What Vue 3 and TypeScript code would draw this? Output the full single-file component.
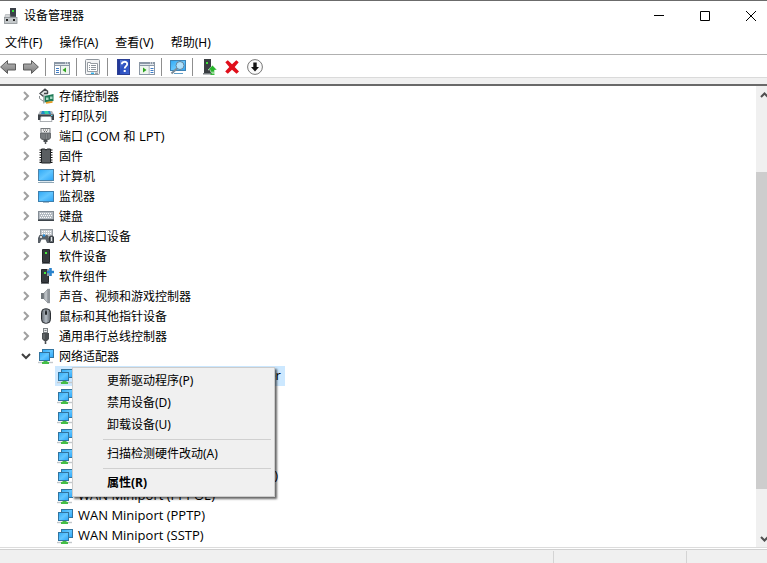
<script setup lang="ts">
import { computed, ref } from 'vue'

interface Category {
  label: string
  icon: string
  open?: boolean
  devices?: string[]
}

type Tool = { icon: string; label: string } | null

const menus: string[] = ['文件(F)', '操作(A)', '查看(V)', '帮助(H)']

const tools: Tool[] = [
  { icon: 'back', label: '后退' },
  { icon: 'forward', label: '前进' },
  null,
  { icon: 'tree-pane', label: '显示/隐藏控制台树' },
  null,
  { icon: 'props', label: '属性' },
  null,
  { icon: 'help', label: '帮助' },
  { icon: 'action-pane', label: '显示/隐藏操作窗格' },
  null,
  { icon: 'scan', label: '扫描检测硬件改动' },
  null,
  { icon: 'update', label: '更新驱动程序' },
  { icon: 'remove', label: '卸载设备' },
  { icon: 'disable', label: '禁用设备' },
]

const categories = ref<Category[]>([
  { label: '存储控制器', icon: 'storage' },
  { label: '打印队列', icon: 'printer' },
  { label: '端口 (COM 和 LPT)', icon: 'port' },
  { label: '固件', icon: 'chip' },
  { label: '计算机', icon: 'computer' },
  { label: '监视器', icon: 'monitor' },
  { label: '键盘', icon: 'keyboard' },
  { label: '人机接口设备', icon: 'hid' },
  { label: '软件设备', icon: 'tower' },
  { label: '软件组件', icon: 'component' },
  { label: '声音、视频和游戏控制器', icon: 'speaker' },
  { label: '鼠标和其他指针设备', icon: 'mouse' },
  { label: '通用串行总线控制器', icon: 'usb' },
  {
    label: '网络适配器',
    icon: 'network',
    open: true,
    devices: [
      'Realtek PCI GBE Family Controller',
      'WAN Miniport (IKEv2)',
      'WAN Miniport (IP)',
      'WAN Miniport (IPv6)',
      'WAN Miniport (L2TP)',
      'WAN Miniport (Network Monitor)',
      'WAN Miniport (PPPOE)',
      'WAN Miniport (PPTP)',
      'WAN Miniport (SSTP)',
    ],
  },
])

const selected = ref('Realtek PCI GBE Family Controller')

const contextItems: (string | null)[] = [
  '更新驱动程序(P)',
  '禁用设备(D)',
  '卸载设备(U)',
  null,
  '扫描检测硬件改动(A)',
  null,
  '属性(R)',
]

// Latin runs are set one size larger than the Chinese text beside them.
function runs(label: string): { text: string; latin: boolean }[] {
  return label
    .split(/([ -~]+)/)
    .filter((text) => text.length > 0)
    .map((text) => ({ text, latin: /^[ -~]/.test(text) }))
}

const scroll = { before: 69, view: 317, after: 41 }
const thumb = computed(() => {
  const total = scroll.before + scroll.view + scroll.after
  return {
    top: `${(scroll.before / total) * 100}%`,
    height: `${(scroll.view / total) * 100}%`,
  }
})
</script>

<template>
  <div class="window">
    <svg class="sprite" width="0" height="0" aria-hidden="true">
      <defs>
        <linearGradient id="g-screen" x1="0" y1="0" x2="1" y2="1">
          <stop offset="0" stop-color="#2fa8f5" />
          <stop offset="0.5" stop-color="#62c6ff" />
          <stop offset="1" stop-color="#2aa4f8" />
        </linearGradient>
        <linearGradient id="g-arrow" x1="0" y1="0" x2="0" y2="1">
          <stop offset="0" stop-color="#b8b8b8" />
          <stop offset="1" stop-color="#7c7c7c" />
        </linearGradient>
        <linearGradient id="g-help" x1="0" y1="0" x2="1" y2="1">
          <stop offset="0" stop-color="#6d8ce0" />
          <stop offset="0.5" stop-color="#2b4fc0" />
          <stop offset="1" stop-color="#3c62cf" />
        </linearGradient>
        <linearGradient id="g-mouse" x1="0" y1="0" x2="1" y2="0">
          <stop offset="0" stop-color="#5d636a" />
          <stop offset="0.5" stop-color="#b4bcc4" />
          <stop offset="1" stop-color="#5d636a" />
        </linearGradient>
      </defs>

      <symbol id="i-app" viewBox="0 0 16 16">
        <rect x="7" y="0" width="6" height="9" fill="#3b4148" />
        <rect x="9" y="2" width="2" height="2" fill="#35e03a" />
        <path d="M2.500 6.500H7V9h6l1 1H1.500z" fill="#d3d6d8" stroke="#a4a8ab" stroke-width=".6" />
        <rect x="1.500" y="9.500" width="12.500" height="6" fill="#c4c8ca" stroke="#8d9296" stroke-width=".8" />
        <rect x="3" y="11" width="2" height="2" fill="#222" />
        <rect x="10" y="11" width="2" height="2" fill="#222" />
      </symbol>
      <symbol id="i-back" viewBox="0 0 16 16">
        <path d="M.6 8 7.500 1.600V5h8v6h-8v3.400z" fill="url(#g-arrow)" stroke="#5c5c5c" />
      </symbol>
      <symbol id="i-forward" viewBox="0 0 16 16">
        <path d="M15.400 8 8.500 1.600V5h-8v6h8v3.400z" fill="url(#g-arrow)" stroke="#5c5c5c" />
      </symbol>
      <symbol id="i-tree-pane" viewBox="0 0 16 16">
        <rect x=".5" y="3.500" width="15" height="12" fill="#fff" stroke="#8b97a5" />
        <path d="M0 3h16v4H0z" fill="#8b97a5" />
        <path d="M1 5.500h14" stroke="#dfe5eb" />
        <path d="M11 4h1M13 4h1" stroke="#fff" />
        <path d="M2 9.500h3M2 11.500h3M2 13.500h3" stroke="#3e7cc6" />
        <path d="M6.500 7v8" stroke="#8b97a5" />
        <rect x="7" y="7" width="8" height="8" fill="#eef5ee" />
        <path d="M12 8.500v5L8.500 11z" fill="#2fa51f" />
      </symbol>
      <symbol id="i-action-pane" viewBox="0 0 16 16">
        <rect x=".5" y="3.500" width="15" height="12" fill="#fff" stroke="#8b97a5" />
        <path d="M0 3h16v4H0z" fill="#8b97a5" />
        <path d="M1 5.500h14" stroke="#dfe5eb" />
        <path d="M11 4h1M13 4h1" stroke="#fff" />
        <path d="M11.500 9.500h3M11.500 11.500h3M11.500 13.500h3" stroke="#3e7cc6" />
        <path d="M10 7v8" stroke="#8b97a5" />
        <rect x="1" y="7" width="8.500" height="8" fill="#eef5ee" />
        <path d="M4 8.500v5L7.500 11z" fill="#2fa51f" />
      </symbol>
      <symbol id="i-props" viewBox="0 0 16 16">
        <rect x=".5" y=".5" width="14" height="15" rx="1" fill="#f3f4f5" stroke="#8e959c" />
        <path d="M2.500 3.500h3v1h7v8h-10z" fill="#fff" stroke="#979da3" />
        <path d="M4 6.500h1M6 6.500h5M4 8.500h1M6 8.500h5M4 10.500h1M6 10.500h5" stroke="#8e959c" />
        <path d="M6 14.300h3" stroke="#2fb2ef" stroke-width="1.400" />
        <path d="M10 14.300h3" stroke="#9aa1a8" stroke-width="1.400" />
      </symbol>
      <symbol id="i-help" viewBox="0 0 16 16">
        <rect x="1.500" y=".5" width="12" height="15" fill="url(#g-help)" stroke="#2b3f94" />
        <path d="M2 1h2v14H2z" fill="#22389a" />
        <path d="M5.800 5.200c0-3.200 5.400-3.200 5.400-.2 0 2.200-2.500 2.200-2.500 4.600" fill="none" stroke="#fff" stroke-width="1.800" />
        <rect x="7.700" y="11" width="2" height="2" fill="#fff" />
      </symbol>
      <symbol id="i-scan" viewBox="0 0 16 16">
        <rect x=".5" y="1.500" width="15" height="10" fill="url(#g-screen)" stroke="#3d83b5" />
        <path d="M4 14.500h9" stroke="#5f9cc6" />
        <circle cx="10" cy="6.500" r="4" fill="#bfe6fb" fill-opacity=".85" stroke="#62849c" />
        <path d="M7 9.500 1.500 14.500" stroke="#7a8b98" stroke-width="2" />
      </symbol>
      <symbol id="i-update" viewBox="0 0 16 16">
        <path d="M3 0h7v14H3z" fill="#3a3e42" />
        <path d="M2 14h9v1.500H2z" fill="#777c80" />
        <rect x="5" y="3" width="2" height="2" fill="#41e23c" />
        <path d="M11.500 6.300 16 11h-2.500v2h-4v-2H7z" fill="#28b62c" stroke="#fff" stroke-width=".4" />
        <path d="M9.500 14h4M9.500 15.600h4" stroke="#28b62c" />
      </symbol>
      <symbol id="i-remove" viewBox="0 0 16 16">
        <path d="M1.300 3.300 3.800 1.300l4.200 4 4.300-4L14.700 3.200 10.700 8l4.300 4.500-2.500 2.200L8 10.700l-4.200 4L1.200 12.500 5.300 8z" fill="#e00f1b" />
      </symbol>
      <symbol id="i-disable" viewBox="0 0 16 16">
        <circle cx="8" cy="8" r="7.400" fill="#fafafa" stroke="#777" />
        <path d="M6.300 3.500h3.400V8H12l-4 4.500L4 8h2.300z" fill="#111" />
      </symbol>

      <symbol id="i-storage" viewBox="0 0 16 16">
        <path d="M6.500 1 1.500 5.500l5 4H9V6l3-1.500z" fill="#e3e5e6" />
        <path d="M10 3.500 7 1.200 2 5.500l3.500 3M6 5.500h3.500V3.500" fill="none" stroke="#44484b" stroke-width="1.300" />
        <path d="M1.500 8v2.500L5 13h1" fill="none" stroke="#8a8f92" />
        <path d="M6.500 8 15.500 6v7l-9 1.500z" fill="#1f7a57" />
        <path d="M8 9.500h2.500V12H8zM12 8.500h2.500V11H12z" fill="#a5d6bf" />
        <path d="M5.800 6.500v9" stroke="#8e9496" />
        <path d="M8 14.900 14.500 13.800" stroke="#e99b22" stroke-width="1.700" />
      </symbol>
      <symbol id="i-printer" viewBox="0 0 16 16">
        <path d="M2 3h12l2 3.500V11H0V6.500z" fill="#aeb4b9" />
        <path d="M4 3h8l1 3H3z" fill="#2589c9" />
        <path d="M6 3h4l1 3H7z" fill="#35d2a4" />
        <path d="M0 6.500h16V12h-2.500V9h-11v3H0z" fill="#3d4247" />
        <path d="M3 8.500h10l1 5H2z" fill="#fff" stroke="#878d92" stroke-width=".7" />
        <path d="M13 7.500h1.500" stroke="#53d8ef" />
      </symbol>
      <symbol id="i-port" viewBox="0 0 16 16">
        <rect x="3" y=".5" width="9" height="4.500" fill="#eceded" stroke="#777b7e" />
        <path d="M5 2h1M7 2h1M9 2h1M6 3.500h1M8 3.500h1" stroke="#666" />
        <path d="M2 5h11v5l-2 2H4l-2-2z" fill="#6a6e71" />
        <path d="M4 6v4M6 6v5M8.500 6v5M11 6v4" stroke="#85898c" />
        <path d="M5.500 11.500h4V14h-4z" fill="#44484b" />
        <path d="M7.500 13v3" stroke="#55595c" stroke-width="1.500" />
      </symbol>
      <symbol id="i-chip" viewBox="0 0 16 16">
        <path d="M1.500 2h13M1.500 4.500h13M1.500 7h13M1.500 9.500h13M1.500 12h13M1.500 14.300h13" stroke="#111" stroke-width="1.200" />
        <path d="M3.500 1h3L8 2l1.500-1h3v14h-9z" fill="#5a5e61" stroke="#1f2224" />
      </symbol>
      <symbol id="i-computer" viewBox="0 0 16 16">
        <rect x=".5" y="1.500" width="15" height="11" fill="url(#g-screen)" stroke="#4d83a8" />
        <path d="M0 14.500h16" stroke="#8fa6b5" />
        <path d="M2 13.500h12" stroke="#dde8ef" />
      </symbol>
      <symbol id="i-monitor" viewBox="0 0 16 16">
        <rect x=".5" y="3.500" width="15" height="10" fill="url(#g-screen)" stroke="#3d7fae" />
        <path d="M5 14.500h6" stroke="#a9bcc9" />
      </symbol>
      <symbol id="i-keyboard" viewBox="0 0 16 16">
        <rect x=".5" y="3.500" width="15" height="8" fill="#b4bbc2" stroke="#858d95" />
        <path d="M2 5.500h12M3 7.500h11M2 9.500h12" stroke="#fff" stroke-dasharray="1 1" />
        <path d="M0 11.500h16V13H0z" fill="#3d444a" />
      </symbol>
      <symbol id="i-hid" viewBox="0 0 16 16">
        <rect x="2.500" y="1.500" width="12" height="7" fill="#c3c8cd" stroke="#969da3" />
        <path d="M4 3.500h10M4 5.500h10" stroke="#fff" stroke-dasharray="1 1" />
        <path d="M0 15v-5l1.500-3H4l1 1h2l1-1h1.500L11 10v5H9l-1.500-3.500h-4L2 15z" fill="#596067" />
        <path d="M2 9h2M3 8v2" stroke="#fff" />
        <circle cx="6" cy="7.500" r="1.200" fill="#258cdb" />
        <path d="M11.500 14.500V9c0-1.300 4-1.300 4 0v5.500z" fill="#646b71" stroke="#30353a" />
        <path d="M13.500 9v4" stroke="#e1e3e5" />
      </symbol>
      <symbol id="i-tower" viewBox="0 0 16 16">
        <path d="M4.500 1.500h7v13h-7z" fill="#373b3f" stroke="#24272a" />
        <rect x="7" y="4" width="2" height="2" fill="#46ef3c" />
        <path d="M4 15.500h8" stroke="#74797d" />
      </symbol>
      <symbol id="i-component" viewBox="0 0 16 16">
        <path d="M3.500 1.500h7v13h-7z" fill="#373b3f" stroke="#24272a" />
        <rect x="6" y="4" width="2" height="2" fill="#46ef3c" />
        <path d="M3 15.500h8" stroke="#74797d" />
        <path d="M9 0h7v8H9z" fill="#fff" fill-opacity=".5" />
        <path d="M12.500 0v8M9 4h7" stroke="#2b83cc" stroke-width="2.600" />
      </symbol>
      <symbol id="i-speaker" viewBox="0 0 16 16">
        <path d="M3 5h3v6H3z" fill="#6f757a" />
        <path d="M6 5 10 1v14L6 11z" fill="#b9bec2" stroke="#878d92" stroke-width=".7" />
        <path d="M9.500.8H12v14.400H9.500z" fill="#8f959a" />
      </symbol>
      <symbol id="i-mouse" viewBox="0 0 16 16">
        <rect x="3.500" y=".7" width="9" height="14.600" rx="4" fill="url(#g-mouse)" stroke="#2b2f33" />
        <path d="M8 1v5" stroke="#2b2f33" />
        <rect x="7" y="3" width="2" height="4" rx="1" fill="#25282b" />
      </symbol>
      <symbol id="i-usb" viewBox="0 0 16 16">
        <rect x="5.500" y=".5" width="4" height="4" fill="#e8e9ea" stroke="#7c8184" />
        <path d="M6.500 2.500h2" stroke="#7c8184" />
        <path d="M4 5h7v6l-2 2H6l-2-2z" fill="#4a4e51" />
        <path d="M6 6v5" stroke="#777c7f" />
        <path d="M7.500 13v3" stroke="#4a4e51" stroke-width="1.600" />
      </symbol>
      <symbol id="i-network" viewBox="0 0 16 16">
        <rect x="4.500" y="1.500" width="11" height="8" fill="url(#g-screen)" stroke="#32749f" />
        <rect x="1.500" y="4.500" width="10" height="8" fill="url(#g-screen)" stroke="#32749f" />
        <path d="M0 14.500h15" stroke="#c3c8cb" stroke-width="1.400" />
        <path d="M5.500 13h4v1H11v2H4v-2h1.500z" fill="#45bd48" />
      </symbol>
    </svg>

    <header class="titlebar">
      <svg class="icon"><use href="#i-app" /></svg>
      <h1 class="title">设备管理器</h1>
      <div class="controls">
        <button type="button" aria-label="最小化">
          <svg class="glyph" viewBox="0 0 10 10"><path d="M0 4.500h10" /></svg>
        </button>
        <button type="button" aria-label="最大化">
          <svg class="glyph" viewBox="0 0 10 10"><path d="M.5.5h9v9h-9z" /></svg>
        </button>
        <button type="button" aria-label="关闭">
          <svg class="glyph" viewBox="0 0 10 10"><path d="M0 0l10 10M10 0 0 10" /></svg>
        </button>
      </div>
    </header>

    <nav class="menubar">
      <button v-for="menu in menus" :key="menu" type="button">{{ menu }}</button>
    </nav>

    <div class="toolbar" role="toolbar">
      <template v-for="(tool, i) in tools" :key="i">
        <button v-if="tool" type="button" :aria-label="tool.label">
          <svg class="icon"><use :href="`#i-${tool.icon}`" /></svg>
        </button>
        <span v-else class="divider"></span>
      </template>
    </div>

    <main class="content">
      <div class="pane">
        <ul class="tree" role="tree">
          <li v-for="category in categories" :key="category.label" role="treeitem">
            <div class="row">
              <button
                class="expander"
                :class="{ open: category.open }"
                type="button"
                :aria-label="category.label"
                @click="category.open = !category.open"
              >
                <svg viewBox="0 0 10 10"><path d="M3 1l4 4-4 4" /></svg>
              </button>
              <svg class="icon"><use :href="`#i-${category.icon}`" /></svg>
              <span class="label"><span
                v-for="(run, i) in runs(category.label)"
                :key="i"
                :class="{ latin: run.latin }"
              >{{ run.text }}</span></span>
            </div>
            <ul v-if="category.open && category.devices" class="devices">
              <li
                v-for="device in category.devices"
                :key="device"
                class="device"
                :class="{ selected: device === selected }"
                role="treeitem"
                @click="selected = device"
              >
                <svg class="icon"><use href="#i-network" /></svg>
                <span class="label latin">{{ device }}</span>
              </li>
            </ul>
          </li>
        </ul>

        <div class="context" role="menu">
          <template v-for="(item, i) in contextItems" :key="i">
            <button
              v-if="item"
              type="button"
              role="menuitem"
              :class="{ primary: i === contextItems.length - 1 }"
            >{{ item }}</button>
            <hr v-else />
          </template>
        </div>
      </div>

      <div class="scrollbar">
        <button type="button" aria-label="向上滚动">
          <svg viewBox="0 0 9 6"><path d="M1 5l3.500-3.500L8 5" /></svg>
        </button>
        <div class="track"><div class="thumb" :style="thumb"></div></div>
        <button type="button" aria-label="向下滚动">
          <svg viewBox="0 0 9 6"><path d="M1 1l3.500 3.500L8 1" /></svg>
        </button>
      </div>
    </main>

    <footer class="status">
      <span class="cell wide"></span>
      <span class="cell"></span>
      <span class="cell last"></span>
    </footer>
  </div>
</template>

<style>
body {
  background: #fff;
  overflow: hidden;
}
</style>

<style scoped>
.window {
  display: flex;
  flex-direction: column;
  height: 100vh;
  box-sizing: border-box;
  border-top: 1px solid #6b6b6b;
  overflow: hidden;
  background: #fff;
  color: #000;
  font-family: 'Noto Sans', 'Noto Sans CJK SC', sans-serif;
  font-size: 12px;
  line-height: 20px;
}

.sprite {
  position: absolute;
}

button {
  display: flex;
  align-items: center;
  justify-content: center;
  margin: 0;
  padding: 0;
  border: 0;
  background: none;
  color: inherit;
  font: inherit;
  white-space: nowrap;
}

.icon {
  display: block;
  flex: none;
  width: 16px;
  height: 16px;
}

.titlebar {
  display: flex;
  flex: none;
  align-items: center;
  height: 30px;
  padding-left: 3px;
}

.title {
  flex: 1;
  margin: 0 0 0 5px;
  font-size: 12px;
  font-weight: 400;
}

.controls {
  display: flex;
  align-self: stretch;
  margin-right: -7px;
}

.controls button {
  width: 46px;
}

.glyph {
  width: 10px;
  height: 10px;
  fill: none;
  stroke: #000;
}

.menubar {
  display: flex;
  flex: none;
  gap: 17px;
  height: 23px;
  padding-left: 5px;
  border-bottom: 1px solid #b0b0b0;
}

.toolbar {
  display: flex;
  flex: none;
  align-items: center;
  gap: 7px;
  height: 22px;
  padding-top: 1px;
  box-sizing: border-box;
}

.divider {
  width: 1px;
  height: 18px;
  margin: 0 1px 0 -1px;
  background: #8f8f8f;
}

.content {
  display: flex;
  flex: 1;
  min-height: 0;
  border-top: 1px solid #dadada;
  border-bottom: 1px solid #dcdcdc;
}

.pane {
  position: relative;
  flex: 1;
  min-width: 0;
  margin-top: 6px;
  border-top: 2px solid #696969;
  overflow: hidden;
  box-shadow: 0 -6px 0 #f0f0f0;
}

.tree,
.devices {
  margin: 0;
  padding: 0;
  list-style: none;
}

.row {
  display: flex;
  align-items: center;
  height: 20px;
  padding-left: 20px;
}

.label {
  padding: 0 4px 0 5px;
  white-space: pre;
}

.row .label {
  padding-top: 2px;
}

.latin {
  font-family: 'Open Sans', 'Noto Sans', sans-serif;
  font-size: 13px;
}

.row .latin {
  line-height: 13px;
}

.device .label {
  padding-bottom: 2px;
}

.expander {
  width: 12px;
  height: 12px;
  margin-right: 6px;
}

.expander svg {
  width: 10px;
  height: 10px;
  fill: none;
  stroke: #a0a0a0;
  stroke-width: 2;
}

.expander.open svg {
  stroke: #404040;
  transform: rotate(90deg);
}

.device {
  display: flex;
  align-items: center;
  width: max-content;
  height: 20px;
  margin-left: 55px;
  padding-left: 2px;
}

.device.selected {
  background: #cce8ff;
}

.context {
  position: absolute;
  left: 72px;
  top: 281px;
  display: flex;
  flex-direction: column;
  width: 203px;
  box-sizing: border-box;
  padding: 2px;
  border: 1px solid #ccc;
  background: #f0f0f0;
  box-shadow: 2px 2px 2px rgba(0, 0, 0, 0.6);
}

.context button {
  justify-content: flex-start;
  height: 22px;
  padding-left: 32px;
}

.context .primary {
  font-weight: 700;
}

.context hr {
  height: 1px;
  margin: 3px 1px 3px 28px;
  border: 0;
  background: #d0d0d0;
}

.scrollbar {
  display: flex;
  flex: none;
  flex-direction: column;
  width: 11px;
  margin-top: 6px;
  border-top: 2px solid #696969;
  background: #f0f0f0;
  box-shadow: 0 -6px 0 #f0f0f0;
  overflow: hidden;
}

.scrollbar button {
  width: 17px;
  height: 17px;
}

.scrollbar svg {
  width: 9px;
  height: 6px;
  fill: none;
  stroke: #505050;
  stroke-width: 2;
}

.track {
  position: relative;
  flex: 1;
}

.thumb {
  position: absolute;
  width: 100%;
  background: #cdcdcd;
}

.status {
  display: flex;
  flex: none;
  height: 12px;
  margin-top: 1px;
  border-top: 1px solid #d0d0d0;
  padding-top: 1px;
  background: #f0f0f0;
}

.cell {
  flex: 0 0 132px;
  border-right: 1px solid #d4d4d4;
}

.cell.wide {
  flex: 1;
}

.cell.last {
  flex-basis: 80px;
  border: 0;
}
</style>
